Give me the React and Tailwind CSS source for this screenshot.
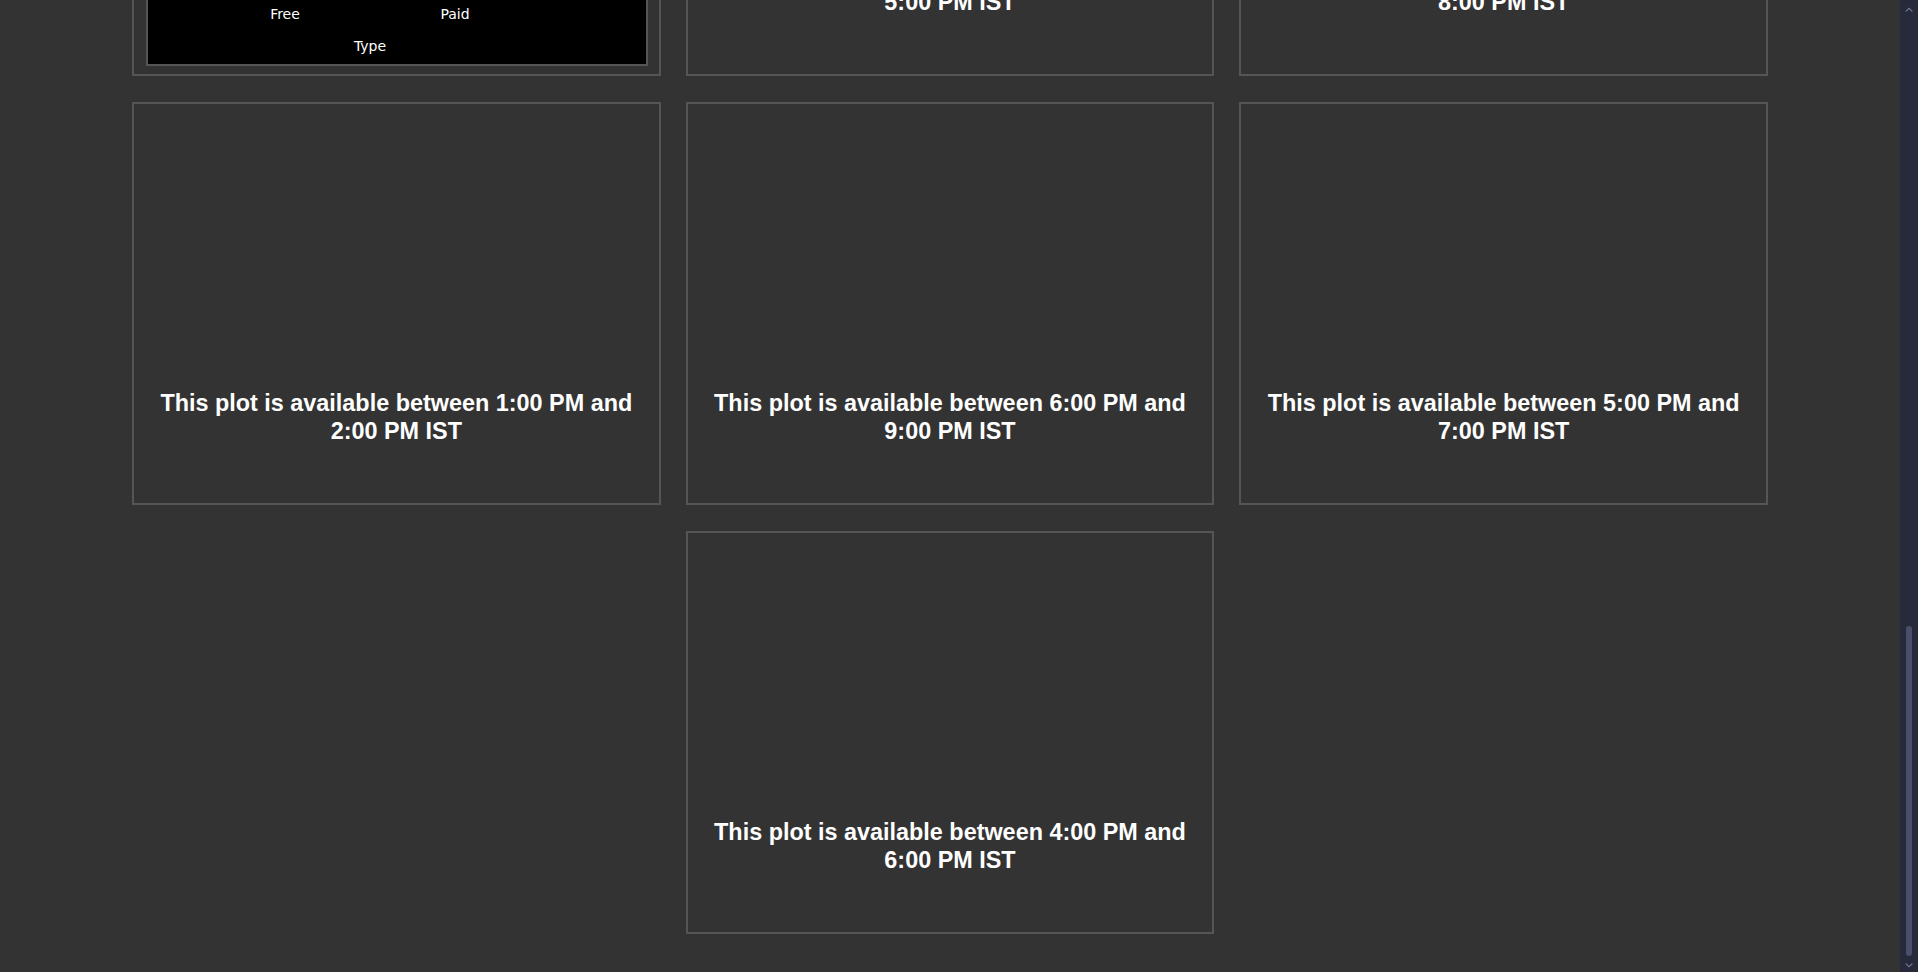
import React, { useLayoutEffect, useRef } from 'react';

const FONT = { fontFamily: '"Liberation Sans", Arial, sans-serif' };

// plots that are only shown during their time window
const ROWS = [
  [
    { kind: 'msg', text: 'This plot is available between 9:00 AM and 11:00 AM IST' },
    { kind: 'msg', text: 'This plot is available between 10:00 AM and 12:00 PM IST' },
    { kind: 'msg', text: 'This plot is available between 11:00 AM and 1:00 PM IST' },
  ],
  [
    { kind: 'msg', text: 'This plot is available between 12:00 PM and 2:00 PM IST' },
    { kind: 'msg', text: 'This plot is available between 2:00 PM and 4:00 PM IST' },
    { kind: 'msg', text: 'This plot is available between 3:00 PM and 4:00 PM IST' },
  ],
  [
    { kind: 'msg', text: 'This plot is available between 7:00 PM and 9:00 PM IST' },
    { kind: 'msg', text: 'This plot is available between 8:00 PM and 10:00 PM IST' },
    { kind: 'msg', text: 'This plot is available between 9:00 PM and 11:00 PM IST' },
  ],
  [
    { kind: 'chart' },
    { kind: 'msg', text: 'This plot is available between 3:00 PM and 5:00 PM IST' },
    { kind: 'msg', text: 'This plot is available between 6:00 PM and 8:00 PM IST' },
  ],
  [
    { kind: 'msg', text: 'This plot is available between 1:00 PM and 2:00 PM IST' },
    { kind: 'msg', text: 'This plot is available between 6:00 PM and 9:00 PM IST' },
    { kind: 'msg', text: 'This plot is available between 5:00 PM and 7:00 PM IST' },
  ],
];

const LAST = { kind: 'msg', text: 'This plot is available between 4:00 PM and 6:00 PM IST' };

function MessageCard({ text }) {
  return (
    <div className="flex h-[403px] flex-col justify-end border-2 border-[#555555] bg-[#333333] px-[18px] pb-[58px]">
      <p className="text-center text-[23.4px] font-bold leading-[28px] text-white" style={FONT}>
        {text}
      </p>
    </div>
  );
}

function TypeChart() {
  const bars = [
    { label: 'Free', value: 0.82 },
    { label: 'Paid', value: 0.18 },
  ];
  return (
    <div className="flex h-[403px] flex-col border-2 border-[#555555] bg-[#333333] pb-[8px] pl-[12px] pr-[11px] pt-[12px]">
      <div
        className="flex flex-1 flex-col border-2 border-[#555555] bg-black pb-[9px] text-[14px] text-white"
        style={{ fontFamily: '"DejaVu Sans", sans-serif' }}
      >
        <div className="flex flex-1">
          <div className="w-[52px]" />
          <div className="flex w-[340px] items-end border-b border-[#444444]">
            {bars.map((b) => (
              <div key={b.label} className="flex h-full flex-1 items-end justify-center">
                <div className="w-[136px] bg-[#636efa]" style={{ height: `${b.value * 100}%` }} />
              </div>
            ))}
          </div>
          <div className="flex-1" />
        </div>
        <div className="ml-[52px] mt-[6px] flex h-[18px] w-[340px] leading-[18px]">
          {bars.map((b) => (
            <div key={b.label} className="flex-1 text-center">
              {b.label}
            </div>
          ))}
        </div>
        <div className="ml-[52px] mt-[14px] h-[18px] w-[340px] text-center leading-[18px]">Type</div>
      </div>
    </div>
  );
}

function Card({ item }) {
  if (item.kind === 'chart') return <TypeChart />;
  return <MessageCard text={item.text} />;
}

function Chevron({ up }) {
  return (
    <svg width="8" height="6" viewBox="0 0 8 6" className="block">
      <path
        d={up ? 'M0 5.5 L4 1.5 L8 5.5 L6.5 5.5 L4 3 L1.5 5.5 Z' : 'M0 0.5 L4 4.5 L8 0.5 L6.5 0.5 L4 3 L1.5 0.5 Z'}
        fill="#7d8196"
      />
    </svg>
  );
}

// page scrollbar, shown scrolled to the end
function ScrollTrack() {
  return (
    <aside className="flex h-screen w-[18px] shrink-0 flex-col items-center bg-[#262a3a]">
      <div className="flex h-[18px] items-center justify-center">
        <Chevron up />
      </div>
      <div className="flex-1" />
      <div className="h-[330px] w-[6px] rounded-full bg-[#4b4f6b]" />
      <div className="flex h-[16px] items-center justify-center pt-[3px]">
        <Chevron />
      </div>
    </aside>
  );
}

export default function App() {
  const scroller = useRef(null);

  // page is viewed scrolled to the bottom
  useLayoutEffect(() => {
    const el = scroller.current;
    if (el) el.scrollTop = el.scrollHeight;
  }, []);

  return (
    <div className="flex h-screen bg-[#333333]">
      <div ref={scroller} className="h-screen flex-1 overflow-y-scroll [scrollbar-width:none]">
        <div className="mx-auto w-full max-w-[1636px] pb-[38px]">
          <header className="flex h-[193px] items-center justify-center">
            <h1 className="text-[32px] font-bold text-white" style={FONT}>
              Live Plots
            </h1>
          </header>
          <div className="grid grid-cols-3 gap-x-[25px] gap-y-[26px]">
            {ROWS.flat().map((item, i) => (
              <Card key={i} item={item} />
            ))}
            <div className="col-start-2">
              <Card item={LAST} />
            </div>
          </div>
        </div>
      </div>
      <ScrollTrack />
    </div>
  );
}
